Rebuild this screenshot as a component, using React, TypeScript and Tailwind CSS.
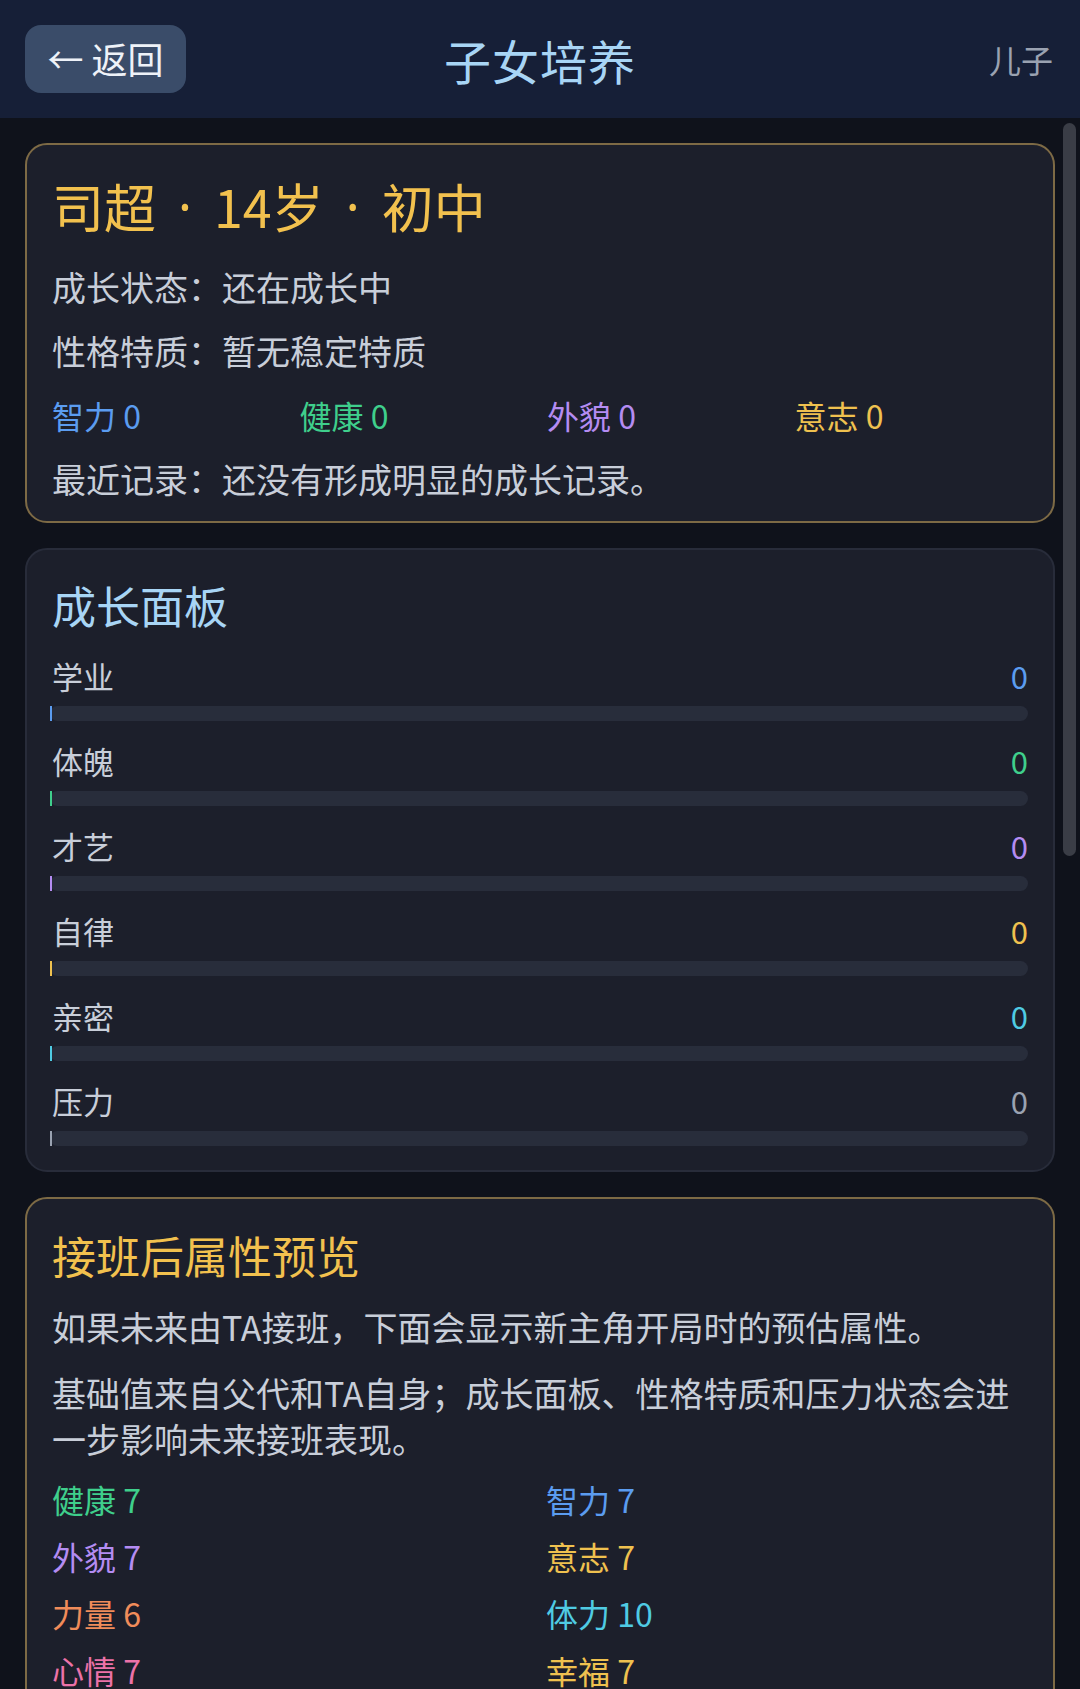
import React from "react";

const FONT = { fontFamily: '"Noto Sans CJK SC", "Noto Sans", sans-serif' };
const LATIN = { fontFamily: '"Noto Sans", sans-serif' };

type Stat = { label: string; value: number; color: string };

const traitStats: Stat[] = [
  { label: "智力", value: 0, color: "text-[#5b9cf0]" },
  { label: "健康", value: 0, color: "text-[#3fcf8c]" },
  { label: "外貌", value: 0, color: "text-[#b48cf2]" },
  { label: "意志", value: 0, color: "text-[#efc14f]" },
];

const growthRows: { label: string; value: number; text: string; fill: string }[] = [
  { label: "学业", value: 0, text: "text-[#5b9cf0]", fill: "bg-[#5b9cf0]" },
  { label: "体魄", value: 0, text: "text-[#3fcf8c]", fill: "bg-[#3fcf8c]" },
  { label: "才艺", value: 0, text: "text-[#b48cf2]", fill: "bg-[#b48cf2]" },
  { label: "自律", value: 0, text: "text-[#efc14f]", fill: "bg-[#efc14f]" },
  { label: "亲密", value: 0, text: "text-[#4fcbe3]", fill: "bg-[#4fcbe3]" },
  { label: "压力", value: 0, text: "text-[#9aa2b1]", fill: "bg-[#9aa2b1]" },
];

const previewStats: Stat[] = [
  { label: "健康", value: 7, color: "text-[#3fcf8c]" },
  { label: "智力", value: 7, color: "text-[#5b9cf0]" },
  { label: "外貌", value: 7, color: "text-[#b48cf2]" },
  { label: "意志", value: 7, color: "text-[#efc14f]" },
  { label: "力量", value: 6, color: "text-[#f08c5a]" },
  { label: "体力", value: 10, color: "text-[#4fcbe3]" },
  { label: "心情", value: 7, color: "text-[#ec72a8]" },
  { label: "幸福", value: 7, color: "text-[#efc14f]" },
];

function Header() {
  return (
    <header className="h-[118px] shrink-0 bg-[#161f37] flex items-center justify-between pl-[25px] pr-[27px] relative">
      <button className="w-[161px] h-[68px] rounded-[16px] bg-[#3a4c69] text-[#eef2f8] text-[36px] leading-none flex items-center justify-center gap-[8px] pb-[2px]">
        <span>←</span>
        <span>返回</span>
      </button>
      <h1 className="absolute left-1/2 -translate-x-1/2 text-[47px] leading-none text-[#a8d5f5] tracking-[1px]">
        子女培养
      </h1>
      <span className="text-[32px] leading-none text-[#9aa2b1]">儿子</span>
    </header>
  );
}

function Dot() {
  return (
    <span style={LATIN} className="mx-[22px]">
      ·
    </span>
  );
}

function ProfileCard() {
  return (
    <section className="rounded-[22px] border-2 border-[#7d6a45] bg-[#1c1f2b] px-[25px] pt-[29px] pb-[18px]">
      <h2 className="text-[52px] leading-[64px] text-[#f2c14e] flex items-center">
        <span>司超</span>
        <Dot />
        <span>14岁</span>
        <Dot />
        <span>初中</span>
      </h2>
      <div className="mt-[25px] flex flex-col gap-[16px] text-[34px] leading-[48px] text-[#c8ced9]">
        <p>成长状态：还在成长中</p>
        <p>性格特质：暂无稳定特质</p>
        <div className="grid grid-cols-4 gap-x-[14px] text-[32px]">
          {traitStats.map((s) => (
            <span key={s.label} className={s.color}>
              {s.label} {s.value}
            </span>
          ))}
        </div>
        <p>最近记录：还没有形成明显的成长记录。</p>
      </div>
    </section>
  );
}

function GrowthPanel() {
  return (
    <section className="rounded-[22px] border-2 border-[#282c3a] bg-[#1c1f2b] px-[25px] pt-[27px] pb-[24px]">
      <h2 className="text-[44px] leading-[56px] text-[#a8d5f5]">成长面板</h2>
      <div className="mt-[23px] flex flex-col gap-[20px]">
        {growthRows.map((r) => (
          <div key={r.label} className="flex flex-col gap-[10px]">
            <div className="flex items-center justify-between h-[40px] text-[31px] leading-[40px]">
              <span className="text-[#c8ced9]">{r.label}</span>
              <span className={r.text}>{r.value}</span>
            </div>
            <div className="h-[15px] rounded-full bg-[#282d3b] flex -ml-[2px]">
              <div
                className={`h-full ${r.fill}`}
                style={{ width: `${Math.max(r.value, 0)}%`, minWidth: 2 }}
              />
            </div>
          </div>
        ))}
      </div>
    </section>
  );
}

function SuccessionPreview() {
  return (
    <section className="rounded-[22px] border-2 border-[#7d6a45] bg-[#1c1f2b] px-[25px] pt-[28px] pb-[28px]">
      <h2 className="text-[44px] leading-[56px] text-[#f2c14e]">接班后属性预览</h2>
      <p className="mt-[21px] text-[34px] leading-[46px] text-[#c8ced9]">
        如果未来由TA接班，下面会显示新主角开局时的预估属性。
      </p>
      <p className="mt-[20px] text-[34px] leading-[46px] text-[#c8ced9]">
        基础值来自父代和TA自身；成长面板、性格特质和压力状态会进一步影响未来接班表现。
      </p>
      <div className="mt-[15px] grid grid-cols-2 gap-x-[12px] gap-y-[13px] text-[32px] leading-[44px]">
        {previewStats.map((s) => (
          <span key={s.label} className={s.color}>
            {s.label} {s.value}
          </span>
        ))}
      </div>
    </section>
  );
}

export default function App() {
  return (
    <div style={FONT} className="w-[1080px] h-[1689px] overflow-hidden bg-[#0f121b] flex flex-col">
      <Header />
      <div className="relative flex-1 overflow-hidden">
        <main className="flex flex-col gap-[25px] pl-[25px] pr-[25px] pt-[25px] w-[1080px] box-border">
          <ProfileCard />
          <GrowthPanel />
          <SuccessionPreview />
        </main>
        {/* scroll thumb */}
        <div className="absolute left-[1063px] top-[5px] w-[13px] h-[733px] rounded-full bg-[#3a3d46]" />
      </div>
    </div>
  );
}
